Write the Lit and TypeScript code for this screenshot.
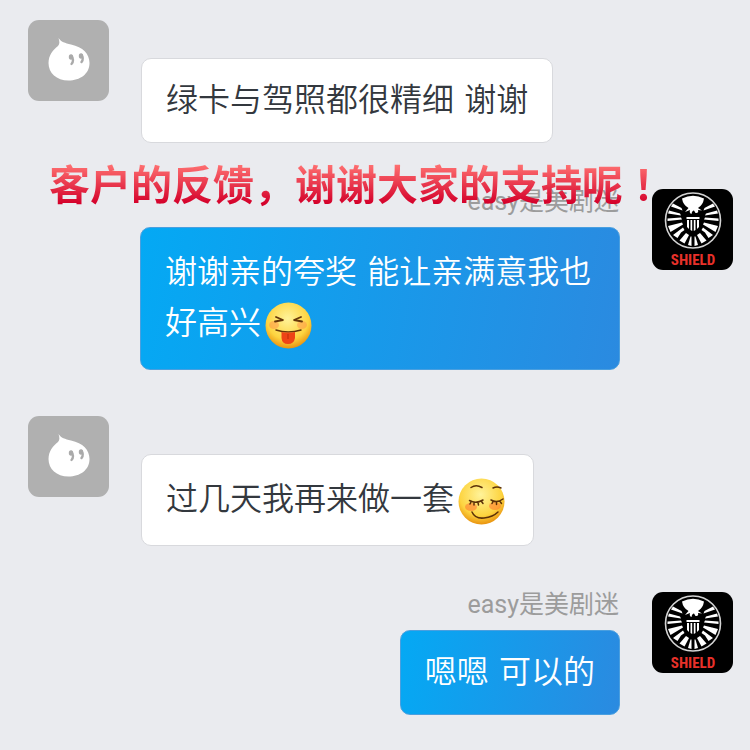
import { LitElement, html, css, svg } from "lit";
import { customElement, property } from "lit/decorators.js";

type Part = string | { emoji: "tongue" | "shy" };
interface Message {
  from: "buyer" | "seller";
  name?: string;
  parts: Part[];
}

const MESSAGES: Message[] = [
  { from: "buyer", parts: ["绿卡与驾照都很精细 谢谢"] },
  { from: "seller", name: "easy是美剧迷", parts: ["谢谢亲的夸奖 能让亲满意我也好高兴", { emoji: "tongue" }] },
  { from: "buyer", parts: ["过几天我再来做一套", { emoji: "shy" }] },
  { from: "seller", name: "easy是美剧迷", parts: ["嗯嗯 可以的"] },
];

@customElement("chat-avatar")
export class ChatAvatar extends LitElement {
  @property() kind: "buyer" | "seller" = "buyer";

  static styles = css`
    :host { display: block; flex: none; }
    .avatar { display: block; width: 81px; height: 81px; }
    .shield { font: bold 15px "Roboto Condensed", Roboto, sans-serif; fill: #e8312a; }
  `;

  private buyer() {
    return svg`
      <rect width="81" height="81" rx="11" fill="#b0b0b0"/>
      <path fill="#fff" d="M30.500 18 C33 22 37 23 43 24.500 C55 27 61.500 34 61.500 43 C61.500 54 52 60.500 40.500 60.500 C28.500 60.500 20.500 53 20.500 43 C20.500 35 25 30 30 26 C32 24 31.500 21 30.500 18Z"/>
      <g fill="none" stroke="#aaa" stroke-width="2.400" stroke-linecap="round">
        <ellipse cx="43" cy="37" rx="1" ry="1.500"/>
        <path d="M43.500 36 C45.500 38 45.500 42 43.500 44"/>
        <ellipse cx="53" cy="36" rx="1" ry="1.500"/>
        <path d="M53.500 35 C55 37 55 40 53.500 42"/>
      </g>`;
  }

  private seller() {
    const wing = svg`
      <path d="M21 14.500 L29.500 19 L30.500 21.500 L19 17.500Z"/>
      <path d="M17 21.500 L28 24.500 L29 26.500 L16 24.500Z"/>
      <path d="M15.500 29.500 L29 28.500 L30 30.500 L15.500 32Z"/>
      <path d="M16 37 L30 33.500 L31 35.500 L18.500 43Z"/>
      <path d="M21 46 L31 38.500 L32.500 41 L29 43.500 L25.500 49Z"/>
      <path d="M27.500 51.500 L34 44 L37 46 L32.500 54.500Z"/>
      <path d="M36 56 L38.500 47.500 L39.500 47.500 L39.500 57Z"/>`;
    return svg`
      <rect width="81" height="81" rx="11" fill="#000"/>
      <circle cx="41" cy="31.500" r="27.500" fill="none" stroke="#d4d4d4" stroke-width="1.600"/>
      <g fill="#fff">
        <path d="M30 9.500 Q41 4 52 9.500 Q51 16 46 19 L50 21.500 L46 21 Q47 24.500 43.500 24 L42 21.500 Q40 21.500 39.500 25 Q37 24 38 21 L33 23 L36.500 19 Q31 16 30 9.500Z"/>
        <path d="M34.500 28 H47.500 V30 H34.500Z M35 31 H37 V40 L35 38Z M38.500 31 H40.200 V42 L38.500 41Z M41.800 31 H43.500 V41 L41.800 42Z M45 31 H47 V38 L45 40Z"/>
        ${wing}
        <g transform="translate(82 0) scale(-1 1)">${wing}</g>
      </g>
      <text class="shield" x="41" y="76" text-anchor="middle">SHIELD</text>`;
  }

  render() {
    return html`<svg class="avatar" viewBox="0 0 81 81" role="img" aria-label=${this.kind}>
      ${this.kind === "buyer" ? this.buyer() : this.seller()}
    </svg>`;
  }
}

@customElement("chat-emoji")
export class ChatEmoji extends LitElement {
  @property() kind: "tongue" | "shy" = "tongue";

  static styles = css`
    :host { display: inline-block; vertical-align: middle; margin: -4px 4px; }
    .face { display: block; width: 47px; height: 47px; }
  `;

  private tongue() {
    return svg`
      <ellipse cx="9" cy="23" rx="5" ry="4" fill="#ff8a4a" opacity=".45"/>
      <ellipse cx="37" cy="23" rx="5" ry="4" fill="#ff8a4a" opacity=".45"/>
      <g fill="none" stroke="#65360a" stroke-width="1.800" stroke-linecap="round" stroke-linejoin="round">
        <path d="M11 15 L18 18 L10 19.500"/><path d="M36 15 L29 18 L37 19.500"/>
        <path d="M11 28 Q23 32 36 28" stroke-width="1.500"/>
      </g>
      <path d="M16.500 30 Q23 31 30 30 V36 Q29 42 23 42 Q17 42 16.500 36Z" fill="#ee4416"/>
      <path d="M23 32 V37" stroke="#bb2a0a"/>`;
  }

  private shy() {
    return svg`
      <ellipse cx="13" cy="29" rx="6" ry="4" fill="#ff6b2c" opacity=".5"/>
      <ellipse cx="37" cy="28" rx="6" ry="4" fill="#ff6b2c" opacity=".5"/>
      <g fill="none" stroke="#5c3108" stroke-width="1.500" stroke-linecap="round">
        <path d="M13 9.500 Q18 6 24 9.500"/><path d="M35 10 Q39 8 43 10"/>
        <path d="M11.500 22.500 Q18 26 25 22 M13 24 L12 26 M16 24.500 V27 M20 24.500 L20.500 27 M23.500 23.500 L25 25.500"/>
        <path d="M33 22 Q39 25.500 45 21 M35 23.500 L34 25.500 M38.500 24 V26.500 M42 23.500 L43.500 25.500"/>
        <path d="M14 34 Q17 41 26 40 Q35 39 40 34"/>
      </g>`;
  }

  render() {
    return html`<svg class="face" viewBox="0 0 47 47" role="img" aria-label=${this.kind}>
      <defs><radialGradient id="skin" cx=".48" cy=".35" r=".65">
        <stop offset="0" stop-color="#fff39a"/><stop offset=".7" stop-color="#fdd440"/><stop offset="1" stop-color="#e9930f"/>
      </radialGradient></defs>
      <circle cx="23.500" cy="23.500" r="23" fill="url(#skin)"/>
      ${this.kind === "tongue" ? this.tongue() : this.shy()}
    </svg>`;
  }
}

@customElement("app-root")
export class AppRoot extends LitElement {
  static styles = css`
    :host {
      display: block;
      position: relative;
      min-height: 100vh;
      box-sizing: border-box;
      padding: 20px 17px 36px 28px;
      overflow: hidden;
      background: #eaebef;
      font-family: "DejaVu Sans", "Noto Sans CJK SC", sans-serif;
    }
    .thread { display: flex; flex-direction: column; gap: 46px; margin: 0; padding: 0; list-style: none; }
    .row { display: flex; align-items: flex-start; gap: 32px; }
    .row.seller { flex-direction: row-reverse; }
    .body { flex: 1; display: flex; flex-direction: column; align-items: flex-start; margin-right: 112px; }
    .seller .body { align-items: flex-end; margin: 0 0 0 112px; }
    .name {
      height: 38px;
      box-sizing: border-box;
      padding-right: 1px;
      font: 25px/26px Roboto, "Noto Sans CJK SC", sans-serif;
      color: #9c9c9c;
    }
    .bubble {
      box-sizing: border-box;
      padding: 16px 24px;
      border: 1px solid #d8d9dd;
      border-radius: 10px;
      background: #fff;
      color: #33383e;
      font-size: 32px;
      font-weight: 350;
      line-height: 51px;
    }
    .bubble.rich { padding-top: 19px; padding-bottom: 20px; }
    .seller .bubble {
      border-color: #4a9fdf;
      background: linear-gradient(100deg, #04a9f4, #2b8ae0) border-box;
      color: #fff;
    }
    .headline {
      position: absolute;
      top: 152px;
      left: 49px;
      margin: 0;
      white-space: nowrap;
      font: bold 41px/60px "Noto Sans CJK SC", sans-serif;
      background: linear-gradient(#ff7272 20%, #d4002a 86%);
      background-clip: text;
      -webkit-background-clip: text;
      color: transparent;
    }
    .mark { font-family: "Noto Sans CJK TC", sans-serif; }
  `;

  render() {
    return html`
      <ul class="thread">
        ${MESSAGES.map((m) => html`
          <li class="row ${m.from}">
            <chat-avatar kind=${m.from}></chat-avatar>
            <div class="body">
              <div class="name">${m.name ?? ""}</div>
              <div class="bubble ${m.parts.length > 1 ? "rich" : ""}">${m.parts.map((p) =>
                typeof p === "string" ? p : html`<chat-emoji kind=${p.emoji}></chat-emoji>`)}</div>
            </div>
          </li>`)}
      </ul>
      <h1 class="headline">客户的反馈，谢谢大家的支持呢<span class="mark" lang="zh-Hant">！</span></h1>
    `;
  }
}
